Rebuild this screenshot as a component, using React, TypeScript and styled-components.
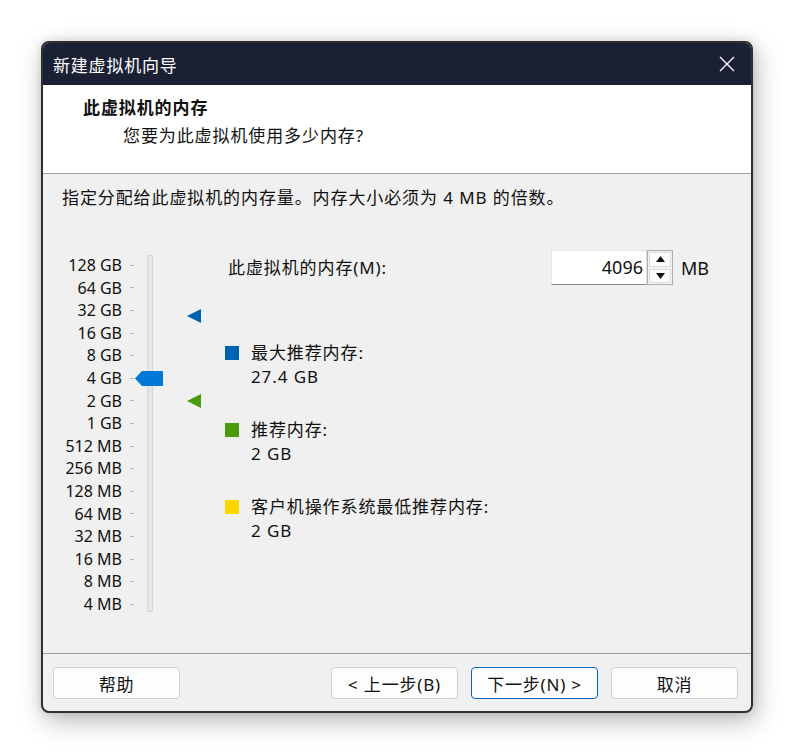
import styled, { createGlobalStyle } from "styled-components";

const GlobalStyle = createGlobalStyle`
  html, body {
    margin: 0;
    background: #ffffff;
  }
  body {
    font-family: "Noto Sans", "Noto Sans CJK SC", sans-serif;
    color: #111111;
  }
  * {
    box-sizing: border-box;
  }
`;

const Page = styled.div`
  padding: 41px 0 0 41px;
  height: 754px;
`;

const Window = styled.div`
  width: 712px;
  height: 672px;
  border: 2px solid #2f2f2f;
  border-radius: 8px;
  overflow: hidden;
  display: flex;
  flex-direction: column;
  background: #f0f0f0;
  box-shadow: 3px 8px 26px rgba(0, 0, 0, 0.28), 0 0 8px rgba(0, 0, 0, 0.12);
`;

const TitleBar = styled.div`
  height: 42px;
  flex: none;
  display: flex;
  align-items: center;
  justify-content: space-between;
  padding: 0 16px 0 10px;
  background: #1c2035;
  color: #ffffff;
  font-size: 17px;
  letter-spacing: 0.8px;
`;

const CloseButton = styled.svg`
  width: 16px;
  height: 16px;
  display: block;
`;

const Header = styled.div`
  height: 89px;
  flex: none;
  background: #ffffff;
  border-bottom: 1px solid #a0a0a0;
  padding-top: 11px;
  font-size: 17px;
  letter-spacing: 0.9px;
  line-height: 24px;
`;

const Heading = styled.div`
  padding-left: 40px;
  font-weight: 700;
  margin-bottom: 4px;
`;

const Subheading = styled.div`
  padding-left: 80px;
`;

const Body = styled.div`
  flex: 1;
  display: flex;
  flex-direction: column;
  border-bottom: 1px solid #a0a0a0;
  font-size: 17px;
  letter-spacing: 0.9px;
  line-height: 24px;
`;

const Description = styled.div`
  padding: 12px 0 0 19px;
`;

const Content = styled.div`
  display: flex;
  margin-top: 40px;
`;

const Scale = styled.div`
  position: relative;
  width: 182px;
  margin-top: 4px;
  display: flex;
  flex: none;
`;

const Labels = styled.div`
  display: flex;
  flex-direction: column;
`;

const ScaleRow = styled.div`
  height: 22.6px;
  display: flex;
  align-items: center;
  font-size: 16px;
  letter-spacing: 0;
  line-height: 22.6px;
`;

const ScaleText = styled.span`
  width: 79px;
  text-align: right;
  white-space: nowrap;
`;

const Tick = styled.span`
  width: 4px;
  height: 1px;
  margin-left: 8px;
  background: #b4b4b4;
`;

const Track = styled.div`
  width: 6px;
  height: 357px;
  margin: 1px 0 0 13px;
  background: #e6e6e6;
  border: 1px solid #d6d6d6;
`;

const Thumb = styled.svg`
  position: absolute;
  left: 92px;
  width: 28px;
  height: 15px;
`;

const Marker = styled.svg<{ $color: string }>`
  position: absolute;
  left: 144px;
  width: 14px;
  height: 14px;
  fill: ${(p) => p.$color};
`;

const RightPane = styled.div`
  display: flex;
  flex-direction: column;
`;

const MemoryRow = styled.div`
  display: grid;
  grid-template-columns: 326px auto auto;
  align-items: center;
  height: 35px;
`;

const MemoryLabel = styled.span`
  padding-left: 3px;
`;

const SpinBox = styled.div`
  display: flex;
  height: 35px;
`;

const NumberInput = styled.div`
  width: 96px;
  height: 35px;
  background: #ffffff;
  border: 1px solid #e3e3e3;
  border-bottom: 1px solid #8a8a8a;
  text-align: right;
  padding-right: 3px;
  font-size: 18px;
  letter-spacing: 0;
  line-height: 32px;
`;

const SpinButtons = styled.div`
  width: 26px;
  display: flex;
  flex-direction: column;
  border: 1px solid #acacac;
  background: #f3f3f3;
`;

const SpinButton = styled.div`
  flex: 1;
  display: flex;
  align-items: center;
  justify-content: center;
  margin: 1px;
  background: #fbfbfb;
  border: 1px solid #dcdcdc;

  svg {
    width: 9px;
    height: 6px;
  }
`;

const Unit = styled.span`
  margin-left: 8px;
  font-size: 18px;
  letter-spacing: 0;
`;

const Legend = styled.div`
  display: flex;
  flex-direction: column;
  gap: 29px;
  margin-top: 56px;
`;

const LegendItem = styled.div`
  display: flex;
  gap: 12px;
`;

const Swatch = styled.span<{ $color: string }>`
  width: 14px;
  height: 14px;
  margin-top: 5px;
  flex: none;
  background: ${(p) => p.$color};
`;

const Footer = styled.div`
  height: 57px;
  flex: none;
  display: flex;
  padding: 13px 13px 0 10px;
  gap: 13px;
`;

const Button = styled.button<{ $primary?: boolean; $push?: boolean }>`
  width: 127px;
  height: 32px;
  margin-left: ${(p) => (p.$push ? "auto" : "0")};
  background: #fdfdfd;
  border: 1px solid ${(p) => (p.$primary ? "#0067c0" : "#d0d0d0")};
  border-radius: 4px;
  font-family: "Noto Sans", "Noto Sans CJK SC", sans-serif;
  font-size: 17px;
  letter-spacing: 0.8px;
  color: #111111;
  padding: 0;
`;

const BLUE = "#0063b1";
const GREEN = "#4b9a0c";
const YELLOW = "#fcd800";

const scale = [
  "128 GB",
  "64 GB",
  "32 GB",
  "16 GB",
  "8 GB",
  "4 GB",
  "2 GB",
  "1 GB",
  "512 MB",
  "256 MB",
  "128 MB",
  "64 MB",
  "32 MB",
  "16 MB",
  "8 MB",
  "4 MB",
];

const ROW = 22.6;
// centre of a value (in MB) on the log scale, measured from the top of the scale
const centerOf = (mb: number) => (17 - Math.log2(mb)) * ROW + ROW / 2;

const legend = [
  { color: BLUE, label: "最大推荐内存:", value: "27.4 GB" },
  { color: GREEN, label: "推荐内存:", value: "2 GB" },
  { color: YELLOW, label: "客户机操作系统最低推荐内存:", value: "2 GB" },
];

const Triangle = ({ color, mb }: { color: string; mb: number }) => (
  <Marker
    $color={color}
    viewBox="0 0 14 14"
    style={{ top: centerOf(mb) - 7 }}
  >
    <path d="M0 7 L14 0 L14 14 Z" />
  </Marker>
);

export default function App() {
  const memory = 4096;
  return (
    <>
      <GlobalStyle />
      <Page>
        <Window>
          <TitleBar>
            <span>新建虚拟机向导</span>
            <CloseButton viewBox="0 0 16 16">
              <path
                d="M1 1 L15 15 M15 1 L1 15"
                stroke="#ffffff"
                strokeWidth="1.3"
                fill="none"
              />
            </CloseButton>
          </TitleBar>
          <Header>
            <Heading>此虚拟机的内存</Heading>
            <Subheading>您要为此虚拟机使用多少内存?</Subheading>
          </Header>
          <Body>
            <Description>
              指定分配给此虚拟机的内存量。内存大小必须为 4 MB 的倍数。
            </Description>
            <Content>
              <Scale>
                <Labels>
                  {scale.map((s) => (
                    <ScaleRow key={s}>
                      <ScaleText>{s}</ScaleText>
                      <Tick />
                    </ScaleRow>
                  ))}
                </Labels>
                <Track />
                <Thumb
                  viewBox="0 0 28 15"
                  style={{ top: centerOf(memory) - 7.5 }}
                >
                  <path d="M0 7.5 L7 0 L28 0 L28 15 L7 15 Z" fill="#0078d7" />
                </Thumb>
                <Triangle color={BLUE} mb={27.4 * 1024} />
                <Triangle color={GREEN} mb={2048} />
              </Scale>
              <RightPane>
                <MemoryRow>
                  <MemoryLabel>此虚拟机的内存(M):</MemoryLabel>
                  <SpinBox>
                    <NumberInput>{memory}</NumberInput>
                    <SpinButtons>
                      <SpinButton>
                        <svg viewBox="0 0 9 6">
                          <path d="M0 6 L4.5 0 L9 6 Z" fill="#111" />
                        </svg>
                      </SpinButton>
                      <SpinButton>
                        <svg viewBox="0 0 9 6">
                          <path d="M0 0 L9 0 L4.5 6 Z" fill="#111" />
                        </svg>
                      </SpinButton>
                    </SpinButtons>
                  </SpinBox>
                  <Unit>MB</Unit>
                </MemoryRow>
                <Legend>
                  {legend.map((l) => (
                    <LegendItem key={l.label}>
                      <Swatch $color={l.color} />
                      <div>
                        <div>{l.label}</div>
                        <div>{l.value}</div>
                      </div>
                    </LegendItem>
                  ))}
                </Legend>
              </RightPane>
            </Content>
          </Body>
          <Footer>
            <Button>帮助</Button>
            <Button $push>&lt; 上一步(B)</Button>
            <Button $primary>下一步(N) &gt;</Button>
            <Button>取消</Button>
          </Footer>
        </Window>
      </Page>
    </>
  );
}
